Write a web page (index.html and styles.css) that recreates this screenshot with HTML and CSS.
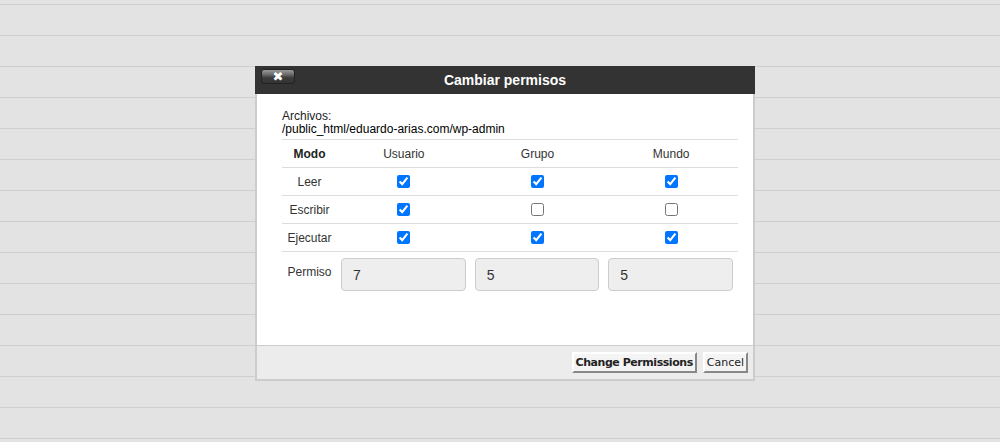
FILE: index.html
```html
<!DOCTYPE html>
<html lang="es">
<head>
    <meta charset="UTF-8">
    <meta name="viewport" content="width=device-width, initial-scale=1.0">
    <title>Cambiar permisos</title>
    <link rel="stylesheet" href="styles.css">
</head>
<body>
    <div class="dialog">
        <div class="dialog-title">
            <button class="close-btn" title="Cerrar">&#10006;</button>
            <span class="title-text">Cambiar permisos</span>
            <span></span>
        </div>

        <div class="dialog-body">
            <div class="file-label">Archivos:</div>
            <div class="file-path">/public_html/eduardo-arias.com/wp-admin</div>

            <div class="perm-table">
                <div class="perm-row perm-head">
                    <span class="mode-cell">Modo</span>
                    <span>Usuario</span>
                    <span>Grupo</span>
                    <span>Mundo</span>
                </div>
                <div class="perm-row">
                    <span class="row-label">Leer</span>
                    <span><input type="checkbox" checked></span>
                    <span><input type="checkbox" checked></span>
                    <span><input type="checkbox" checked></span>
                </div>
                <div class="perm-row">
                    <span class="row-label">Escribir</span>
                    <span><input type="checkbox" checked></span>
                    <span><input type="checkbox"></span>
                    <span><input type="checkbox"></span>
                </div>
                <div class="perm-row">
                    <span class="row-label">Ejecutar</span>
                    <span><input type="checkbox" checked></span>
                    <span><input type="checkbox" checked></span>
                    <span><input type="checkbox" checked></span>
                </div>
                <div class="perm-row perm-values">
                    <span class="row-label">Permiso</span>
                    <span class="value-cell"><input type="text" class="perm-input" value="7"></span>
                    <span class="value-cell"><input type="text" class="perm-input" value="5"></span>
                    <span class="value-cell"><input type="text" class="perm-input" value="5"></span>
                </div>
            </div>
        </div>

        <div class="dialog-footer">
            <button class="btn btn-primary">Change Permissions</button>
            <button class="btn">Cancel</button>
        </div>
    </div>
</body>
</html>
```

FILE: styles.css
```css
body {
    margin: 0;
    height: 442px;
    overflow: hidden;
    font-family: "Liberation Sans", Arial, sans-serif;
    background: repeating-linear-gradient(to bottom,
        #e3e3e3 0, #e3e3e3 4px,
        #cfcfcf 4px, #cfcfcf 5px,
        #e3e3e3 5px, #e3e3e3 31px);
}

.dialog {
    width: 500px;
    margin: 66px 0 0 255px;
    background: #FFFFFF;
}

.dialog-title {
    height: 28px;
    background: #333333;
    display: grid;
    grid-template-columns: 1fr auto 1fr;
    align-items: start;
}

.close-btn {
    justify-self: start;
    width: 34px;
    height: 15px;
    margin: 3px 0 0 6px;
    padding: 0;
    border: 1px solid #222;
    border-radius: 3px;
    background: linear-gradient(to bottom, #9a9a9a 0%, #6a6a6a 35%, #3c3c3c 60%, #333 100%);
    color: #FFFFFF;
    font-size: 13px;
    line-height: 12px;
    font-family: "DejaVu Sans", sans-serif;
    cursor: pointer;
}

.title-text {
    color: #FFFFFF;
    font-size: 14px;
    font-weight: bold;
    line-height: 28px;
}

.dialog-body {
    border-left: 2px solid #cccccc;
    border-right: 2px solid #cccccc;
    padding: 16px 15px 0 25px;
    height: 235px;
    color: #222;
    font-size: 12px;
}

.file-label,
.file-path {
    line-height: 13px;
}

.file-path {
    color: #000;
}

.perm-table {
    margin-top: 3px;
}

.perm-row {
    display: grid;
    grid-template-columns: 55px 1fr 1fr 1fr;
    border-top: 1px solid #dddddd;
    height: 27px;
    align-items: center;
    text-align: center;
    color: #333;
}

.perm-row input[type="checkbox"] {
    width: 13px;
    height: 13px;
    margin: 0 0 1px;
    vertical-align: middle;
}

.perm-head .mode-cell {
    font-weight: bold;
    color: #222;
}

.perm-values {
    height: auto;
    align-items: start;
    padding-top: 6px;
}

.perm-values .row-label {
    padding-top: 7px;
}

.value-cell {
    padding: 0 5px 0 4px;
}

.perm-input {
    box-sizing: border-box;
    width: 100%;
    height: 33px;
    border: 1px solid #cccccc;
    border-radius: 4px;
    background: #eeeeee;
    padding: 0 11px;
    font-size: 14px;
    font-family: "Liberation Sans", Arial, sans-serif;
    color: #333;
}

.dialog-footer {
    height: 33px;
    border: 2px solid #cccccc;
    border-top: 1px solid #cccccc;
    background: #ececec;
    display: flex;
    justify-content: flex-end;
    align-items: center;
    gap: 6px;
    padding-right: 5px;
}

.btn {
    font-family: "DejaVu Sans", Verdana, sans-serif;
    font-size: 11px;
    line-height: 13px;
    padding: 2px 2px;
    background: #f4f4f4;
    color: #222;
    border: 2px solid;
    border-color: #ffffff #888888 #888888 #ffffff;
    cursor: pointer;
}

.btn-primary {
    font-weight: bold;
    letter-spacing: -0.45px;
}
```
